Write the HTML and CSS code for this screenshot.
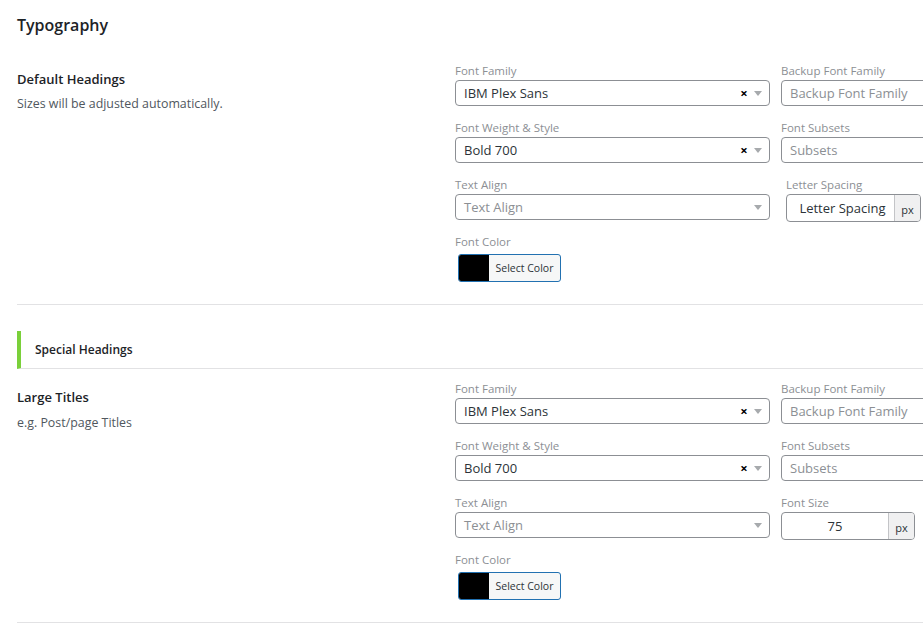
FILE: index.html
```html
<!DOCTYPE html>
<html>
<head>
<meta charset="utf-8">
<link rel="stylesheet" href="styles.css">
</head>
<body>
<div class="page">
  <h1 class="page-title">Typography</h1>

  <div class="setting-row first">
    <div class="setting-info">
      <div class="setting-title">Default Headings</div>
      <div class="setting-desc">Sizes will be adjusted automatically.</div>
    </div>
    <div class="fields">
      <div class="field">
        <div class="label">Font Family</div>
        <div class="select"><span class="value">IBM Plex Sans</span><span class="clear">×</span><span class="arrow"></span></div>
      </div>
      <div class="field">
        <div class="label">Backup Font Family</div>
        <div class="select"><span class="placeholder">Backup Font Family</span></div>
      </div>
      <div class="field">
        <div class="label">Font Weight &amp; Style</div>
        <div class="select"><span class="value">Bold 700</span><span class="clear">×</span><span class="arrow"></span></div>
      </div>
      <div class="field">
        <div class="label">Font Subsets</div>
        <div class="select"><span class="placeholder">Subsets</span></div>
      </div>
      <div class="field">
        <div class="label">Text Align</div>
        <div class="select"><span class="placeholder">Text Align</span><span class="arrow"></span></div>
      </div>
      <div class="field shifted">
        <div class="label">Letter Spacing</div>
        <div class="unit-input ls"><span class="unit-value">Letter Spacing</span><span class="unit">px</span></div>
      </div>
      <div class="field">
        <div class="label">Font Color</div>
        <div class="color-btn"><span class="swatch"></span><span class="color-text">Select Color</span></div>
      </div>
    </div>
  </div>

  <div class="divider"></div>

  <div class="sub-header">Special Headings</div>

  <div class="setting-row second">
    <div class="setting-info">
      <div class="setting-title">Large Titles</div>
      <div class="setting-desc">e.g. Post/page Titles</div>
    </div>
    <div class="fields">
      <div class="field">
        <div class="label">Font Family</div>
        <div class="select"><span class="value">IBM Plex Sans</span><span class="clear">×</span><span class="arrow"></span></div>
      </div>
      <div class="field">
        <div class="label">Backup Font Family</div>
        <div class="select"><span class="placeholder">Backup Font Family</span></div>
      </div>
      <div class="field">
        <div class="label">Font Weight &amp; Style</div>
        <div class="select"><span class="value">Bold 700</span><span class="clear">×</span><span class="arrow"></span></div>
      </div>
      <div class="field">
        <div class="label">Font Subsets</div>
        <div class="select"><span class="placeholder">Subsets</span></div>
      </div>
      <div class="field">
        <div class="label">Text Align</div>
        <div class="select"><span class="placeholder">Text Align</span><span class="arrow"></span></div>
      </div>
      <div class="field">
        <div class="label">Font Size</div>
        <div class="unit-input fs"><span class="unit-value">75</span><span class="unit">px</span></div>
      </div>
      <div class="field">
        <div class="label">Font Color</div>
        <div class="color-btn"><span class="swatch"></span><span class="color-text">Select Color</span></div>
      </div>
    </div>
  </div>

  <div class="divider"></div>
</div>
</body>
</html>
```

FILE: styles.css
```css
* { box-sizing: border-box; }
html, body { margin: 0; padding: 0; background: #fff; }
body {
  font-family: "Open Sans", "Noto Sans", sans-serif;
  color: #1d2327;
  width: 923px;
  height: 630px;
  overflow: hidden;
}
.page {
  padding: 13px 0 0 17px;
  width: 923px;
  height: 630px;
  overflow: hidden;
}
.page-title {
  margin: 0;
  font-size: 16px;
  line-height: 24px;
  font-weight: 600;
  color: #1d2327;
}
.setting-row {
  display: grid;
  grid-template-columns: 438px 641px;
}
.setting-row.first { margin-top: 26px; }
.setting-row.second { margin-top: 12px; }
.setting-info { padding-top: 7px; }
.setting-title {
  font-size: 13px;
  line-height: 18px;
  font-weight: 600;
  color: #1d2327;
}
.setting-desc {
  margin-top: 7px;
  font-size: 12.4px;
  line-height: 18px;
  color: #50575e;
}
.second .setting-desc { margin-top: 8px; }
.fields {
  display: grid;
  grid-template-columns: 316px 315px;
  column-gap: 10px;
  row-gap: 14px;
  align-items: start;
}
.label {
  font-size: 11.5px;
  line-height: 16px;
  color: #8c8f94;
  margin-bottom: 1px;
}
.select {
  height: 26px;
  border: 1px solid #8c8f94;
  border-radius: 4px;
  display: flex;
  align-items: center;
  padding: 0 0 0 8px;
  font-size: 13px;
}
.fields .field:nth-child(odd) .select { width: 315px; }
.value { flex: 1; color: #2c3338; }
.placeholder { flex: 1; color: #8c8f94; }
.clear {
  font-size: 13px;
  font-weight: 700;
  color: #000;
  width: 14px;
  text-align: center;
  line-height: 1;
}
.arrow {
  width: 0;
  height: 0;
  border-left: 4px solid transparent;
  border-right: 4px solid transparent;
  border-top: 5px solid #a7aaad;
  margin: 1px 7px 0 3px;
}
.field.shifted { padding-left: 5px; }
.unit-input {
  height: 28px;
  margin-bottom: -2px;
  border: 1px solid #8c8f94;
  border-radius: 4px;
  display: flex;
  overflow: hidden;
  font-size: 13px;
  color: #2c3338;
}
.unit-input.ls { width: 135px; }
.unit-input.fs { width: 134px; }
.unit-value {
  flex: 1;
  display: flex;
  align-items: center;
  justify-content: center;
}
.unit-input.ls .unit-value { padding-left: 4px; }
.unit {
  width: 26px;
  background: #f0f0f1;
  border-left: 1px solid #c3c4c7;
  font-size: 11px;
  color: #2c3338;
  display: flex;
  align-items: center;
  justify-content: center;
  padding-top: 3px;
}
.color-btn {
  margin: 4px 0 0 3px;
  width: 103px;
  height: 28px;
  border: 1px solid #2271b1;
  border-radius: 3px;
  background: #f6f7f7;
  display: flex;
  overflow: hidden;
}
.swatch {
  width: 30px;
  background: #000;
}
.color-text {
  flex: 1;
  font-size: 10.5px;
  color: #2c3338;
  display: flex;
  align-items: center;
  justify-content: center;
}
.divider {
  margin-top: 22px;
  height: 1px;
  background: #e2e2e4;
}
.sub-header {
  margin-top: 26px;
  height: 38px;
  border-left: 4px solid #7ad03a;
  border-bottom: 1px solid #e2e2e4;
  padding-left: 14px;
  display: flex;
  align-items: center;
  font-size: 12px;
  font-weight: 600;
  color: #1d2327;
}
```
